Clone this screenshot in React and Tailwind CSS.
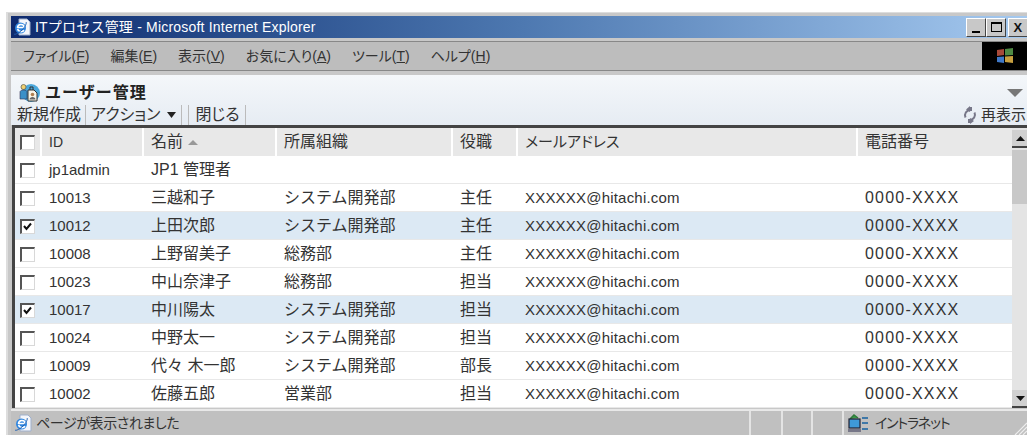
import React from 'react';

const font = "font-['Liberation_Sans','Noto_Sans_CJK_JP',sans-serif]";
// proportional kana, used where the labels run tight
const tight = "[font-feature-settings:'palt']";

const users = [
    { id: 'jp1admin', name: 'JP1 管理者', org: '', role: '', mail: '', tel: '' },
    { id: '10013', name: '三越和子', org: 'システム開発部', role: '主任', mail: 'XXXXXX@hitachi.com', tel: '0000-XXXX' },
    { id: '10012', name: '上田次郎', org: 'システム開発部', role: '主任', mail: 'XXXXXX@hitachi.com', tel: '0000-XXXX', checked: true },
    { id: '10008', name: '上野留美子', org: '総務部', role: '主任', mail: 'XXXXXX@hitachi.com', tel: '0000-XXXX' },
    { id: '10023', name: '中山奈津子', org: '総務部', role: '担当', mail: 'XXXXXX@hitachi.com', tel: '0000-XXXX' },
    { id: '10017', name: '中川陽太', org: 'システム開発部', role: '担当', mail: 'XXXXXX@hitachi.com', tel: '0000-XXXX', checked: true },
    { id: '10024', name: '中野太一', org: 'システム開発部', role: '担当', mail: 'XXXXXX@hitachi.com', tel: '0000-XXXX' },
    { id: '10009', name: '代々 木一郎', org: 'システム開発部', role: '部長', mail: 'XXXXXX@hitachi.com', tel: '0000-XXXX' },
    { id: '10002', name: '佐藤五郎', org: '営業部', role: '担当', mail: 'XXXXXX@hitachi.com', tel: '0000-XXXX' },
];

const menus = [
    ['ファイル(', 'F', ')'],
    ['編集(', 'E', ')'],
    ['表示(', 'V', ')'],
    ['お気に入り(', 'A', ')'],
    ['ツール(', 'T', ')'],
    ['ヘルプ(', 'H', ')'],
];

// page with the blue "e" on it
const IeIcon = () => (
    <svg width="20" height="20" viewBox="0 0 20 20" className="shrink-0">
        <path d="M7 2h8l3 3v13H7z" fill="#f4f6fb" stroke="#9fb0cc" strokeWidth="1" />
        <circle cx="8.500" cy="11" r="5.500" fill="#2f86e0" />
        <path d="M5 10.500h7M5.500 11c0-4.500 6.500-4.500 6.700-.5M5.600 12c.6 3 4.800 3.400 6.400 1.200" fill="none" stroke="#fff" strokeWidth="1.600" />
        <path d="M2 17c1 1 5-1 8-4s5-7 4-8" fill="none" stroke="#1f5fb0" strokeWidth="1" />
    </svg>
);

const Checkbox = ({ checked }) => (
    <span className="block w-[15px] h-[15px] bg-white border border-[#d8d8d8] border-l-2 border-t-2 border-l-[#555] border-t-[#555]">
        {checked && (
            <svg width="11" height="11" viewBox="0 0 11 11" className="block">
                <path d="M2 5l2.500 3L9 2.500" fill="none" stroke="#111" strokeWidth="2" />
            </svg>
        )}
    </span>
);

const CaptionButton = ({ children, className = '' }) => (
    <span className={`w-[20px] h-[19px] bg-[#c8c8c8] border border-white border-r-[#444] border-b-[#444] flex items-center justify-center text-[#111] ${className}`}>
        {children}
    </span>
);

const Cells = ({ id, name, org, role, mail, tel, cellClass, idClass = '', mailClass = '', telClass = '' }) => (
    <>
        <div className={`w-[102px] pl-[7px] shrink-0 ${cellClass} ${idClass}`}>{id}</div>
        <div className={`w-[133px] pl-[7px] shrink-0 ${cellClass}`}>{name}</div>
        <div className={`w-[176px] pl-[7px] shrink-0 ${cellClass}`}>{org}</div>
        <div className={`w-[65px] pl-[7px] shrink-0 ${cellClass}`}>{role}</div>
        <div className={`w-[340px] pl-[7px] shrink-0 ${cellClass} ${mailClass}`}>{mail}</div>
        <div className={`flex-1 pl-[7px] ${cellClass} ${telClass}`}>{tel}</div>
    </>
);

const App = () => {
    return (
        <div className={`w-[1027px] h-[435px] overflow-hidden bg-white pt-[12px] pl-[6px] text-[16px] text-[#333] ${font}`}>
            <div className="w-[1040px] h-[423px] bg-[#c8c8c8] border-t border-l-2 border-[#ddd] pl-[3px] pt-[3px] flex flex-col">
                {/* title bar */}
                <div className="h-[22px] w-[1017px] shrink-0 flex items-center pl-[1px] gap-[3px] bg-gradient-to-r from-[#0e2a6e] via-[#4d78b0] to-[#a6caf0] text-white text-[14px] tracking-[0.2px]">
                    <IeIcon />
                    <span>ITプロセス管理 - Microsoft Internet Explorer</span>
                    <div className="ml-auto flex">
                        <CaptionButton>
                            <span className="block w-[8px] h-[2px] bg-black mt-[9px]" />
                        </CaptionButton>
                        <CaptionButton>
                            <span className="block w-[11px] h-[10px] border border-black border-t-2" />
                        </CaptionButton>
                        <CaptionButton className="ml-[2px]">
                            <span className="text-[13px] font-bold leading-none">X</span>
                        </CaptionButton>
                    </div>
                </div>

                {/* menu bar */}
                <div className="h-[30px] w-[1017px] shrink-0 mt-[3px] flex bg-[#bdbdbd] border-y border-[#888]">
                    <div className={`flex-1 flex items-center pl-[12px] gap-[21px] text-[14px] ${tight}`}>
                        {menus.map(([before, key, after]) => (
                            <span key={key}>
                                {before}
                                <span className="underline">{key}</span>
                                {after}
                            </span>
                        ))}
                    </div>
                    <div className="w-[46px] bg-black flex items-center justify-center">
                        <svg width="22" height="22" viewBox="0 0 22 22">
                            <path d="M3 5l7-1v6l-7 1z" fill="#a84a3a" />
                            <path d="M11 4l8-1v7l-8 .5z" fill="#4f8a44" />
                            <path d="M3 12l7-.5v6.500l-7-1z" fill="#3f78c8" />
                            <path d="M11 11.500l8-.5v7l-8-1z" fill="#c8a040" />
                        </svg>
                    </div>
                </div>

                {/* page header */}
                <div className="h-[50px] w-[1017px] shrink-0 mt-[4px] bg-gradient-to-b from-[#f4f7fa] to-[#e6ecf3] flex flex-col">
                    <div className="h-[29px] flex items-center pl-[8px] gap-[5px] pr-[5px] pt-[7px]">
                        <svg width="21" height="20" viewBox="0 0 21 20" className="shrink-0">
                            <circle cx="12" cy="10" r="9" fill="#4aa8dc" />
                            <circle cx="4.500" cy="4" r="2.500" fill="#f0d070" stroke="#665" strokeWidth="0.8" />
                            <path d="M1 16V9c0-1 1-2 3.500-2S8 8 8 9v7z" fill="#3a90c8" stroke="#335" strokeWidth="0.6" />
                            <path d="M9 7h6l3 3v8H9z" fill="#f8f6ea" stroke="#333" strokeWidth="1" />
                            <path d="M11 7V4h3v3" fill="none" stroke="#333" strokeWidth="1" />
                            <path d="M10.500 16.500c0-3.500 6-3.500 6 0z" fill="#666" />
                            <circle cx="13.500" cy="11.500" r="1.800" fill="#b08050" />
                        </svg>
                        <span className="font-bold text-[16px] text-[#222] tracking-[1px]">ユーザー管理</span>
                        <svg width="16" height="8" viewBox="0 0 16 8" className="ml-auto">
                            <path d="M0 0h16L8 8z" fill="#777" />
                        </svg>
                    </div>
                    <div className="h-[21px] flex items-center pl-[6px] text-[16px] leading-[20px]">
                        <span className="pr-[4px] border-r border-[#bbb]">新規作成</span>
                        <span className={`px-[5px] border-r border-[#bbb] flex items-center gap-[7px] ${tight}`}>
                            アクション
                            <svg width="9" height="6" viewBox="0 0 9 6">
                                <path d="M0 0h9L4.500 6z" fill="#222" />
                            </svg>
                        </span>
                        <span className={`ml-[6px] pl-[6px] pr-[5px] border-x border-[#bbb] ${tight}`}>閉じる</span>
                        <span className="ml-auto flex items-center gap-[3px] shrink-0 whitespace-nowrap mr-[2px] text-[15px]">
                            <svg width="16" height="18" viewBox="0 0 16 18" className="shrink-0">
                                <path d="M9 1v3C4 4 2 8 3.500 11.500M7 17v-3c5 0 7-4 5.500-7.500" fill="none" stroke="#778" strokeWidth="2" />
                                <path d="M8 0l-4 3.500L8 6zM8 12l4 3-4 3z" fill="#778" />
                            </svg>
                            再表示
                        </span>
                    </div>
                </div>

                {/* user list */}
                <div className="w-[1016px] h-[283px] ml-[1px] shrink-0 bg-white border-t-[3px] border-l-[3px] border-[#444] flex">
                    <div className="flex-1 min-w-0 flex flex-col">
                        <div className="h-[28px] shrink-0 bg-[#e8e8e8] flex items-center">
                            <div className="w-[27px] h-full shrink-0 pl-[5px] flex items-center border-r-2 border-white">
                                <Checkbox />
                            </div>
                            <Cells
                                id="ID"
                                name={
                                    <span className="flex items-center gap-[5px]">
                                        名前
                                        <svg width="10" height="5" viewBox="0 0 10 5">
                                            <path d="M0 5h10L5 0z" fill="#999" />
                                        </svg>
                                    </span>
                                }
                                org="所属組織"
                                role="役職"
                                mail="メールアドレス"
                                tel="電話番号"
                                cellClass="h-full flex items-center border-r-2 border-white last:border-r-0"
                                idClass="text-[14px]"
                                mailClass={`${tight} text-[15px]`}
                            />
                        </div>
                        {users.map(user => (
                            <div
                                key={user.id}
                                className={`h-[28px] shrink-0 flex items-center pt-[1px] border-b border-[#e8e8e8] ${user.checked ? 'bg-[#dce9f4]' : 'bg-white'}`}
                            >
                                <div className="w-[27px] shrink-0 pl-[5px]">
                                    <Checkbox checked={user.checked} />
                                </div>
                                <Cells
                                    {...user}
                                    cellClass="whitespace-nowrap"
                                    idClass="text-[15px]"
                                    mailClass="text-[15px] tracking-[0.2px]"
                                    telClass="text-[16px] tracking-[1.2px]"
                                />
                            </div>
                        ))}
                    </div>

                    {/* scroll bar */}
                    <div className="w-[16px] shrink-0 flex flex-col bg-[#e4e4e4] pt-[2px]">
                        <span className="h-[18px] shrink-0 bg-[#d0d0d0] border-b-2 border-[#444] flex items-center justify-center">
                            <svg width="9" height="5" viewBox="0 0 9 5">
                                <path d="M0 5h9L4.500 0z" fill="#111" />
                            </svg>
                        </span>
                        <span className="h-[54px] shrink-0 bg-[#c8c8c8] mt-[2px]" />
                        <span className="mt-auto h-[18px] shrink-0 bg-[#d0d0d0] border-b-2 border-[#444] flex items-center justify-center">
                            <svg width="9" height="5" viewBox="0 0 9 5">
                                <path d="M0 0h9L4.500 5z" fill="#111" />
                            </svg>
                        </span>
                    </div>
                </div>

                {/* status bar */}
                <div className={`w-[1017px] flex-1 mt-[1px] bg-[#c0c0c0] flex items-center text-[14px] border-t-2 border-[#e8e8e8] ${tight}`}>
                    <div className="w-[738px] shrink-0 flex items-center gap-[3px] pl-[2px] h-full tracking-[-0.4px]">
                        <IeIcon />
                        ページが表示されました
                    </div>
                    <div className="w-[32px] h-full border-l-2 border-[#e4e4e4]" />
                    <div className="w-[30px] h-full border-l-2 border-[#e4e4e4]" />
                    <div className="w-[31px] h-full border-l-2 border-[#e4e4e4]" />
                    <div className="flex-1 h-full border-l-2 border-[#e4e4e4] flex items-center gap-[6px] pl-[3px] relative tracking-[-1.2px]">
                        <svg width="22" height="20" viewBox="0 0 22 20" className="shrink-0">
                            <path d="M3 6l4-4 4 3" fill="#3a9a4a" stroke="#2f7a3a" strokeWidth="1.500" />
                            <rect x="2" y="6" width="11" height="9" fill="#3f9ad8" stroke="#223" strokeWidth="1.200" />
                            <rect x="1" y="16" width="13" height="3" fill="#778" />
                            <path d="M15 4h6v2h-6zM15 9h6v2h-6zM15 15h6v2h-6z" fill="#3f78a8" />
                        </svg>
                        イントラネット
                        <svg width="14" height="14" viewBox="0 0 14 14" className="absolute right-[1px] bottom-[0px]">
                            <path d="M2 14L14 2M6 14l8-8M10 14l4-4" stroke="#eee" strokeWidth="1.200" />
                        </svg>
                    </div>
                </div>
            </div>
        </div>
    );
};

export default App;
